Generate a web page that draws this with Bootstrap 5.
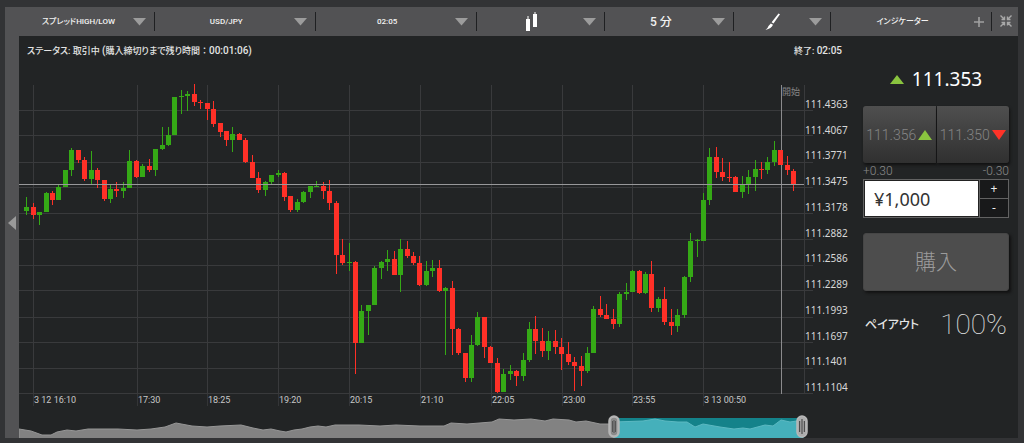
<!DOCTYPE html>
<html lang="ja">
<head>
<meta charset="utf-8">
<meta name="viewport" content="width=device-width, initial-scale=1">
<title>スプレッドHIGH/LOW USD/JPY</title>
<link href="https://cdn.jsdelivr.net/npm/bootstrap@5.3.0/dist/css/bootstrap.min.css" rel="stylesheet">
<style>
  body { background: #323335; color: #e4e4e4; font: 9px/12px Roboto, "Noto Sans CJK JP", sans-serif; font-feature-settings: "palt"; }
  .frame { background: #525254; margin: 7px 6px 5px 5px; }
  .rail { width: 14px; background: none; border: 0; padding: 0; flex: none; }
  .toolbar { height: 29px; font-size: 8px; font-weight: 500; }
  .tool { position: relative; min-width: 0; }
  .tool + .tool::before { content: ""; position: absolute; left: 0; top: 5px; height: 19px; width: 1px; background: #1f2022; }
  .tool select, .tool button { width: 100%; height: 29px; border: 0; padding: 0 16px 0 0; background: none; color: #f2f2f2; font: inherit; font-feature-settings: "palt"; text-align: center; text-align-last: center; appearance: none; }
  .tool select.period { font-size: 12px; }
  .tool option { color: #222; }
  .tool .caret { position: absolute; right: 8px; top: 11px; pointer-events: none; }
  .tool .plus { position: absolute; right: 7px; top: 10px; pointer-events: none; }
  .tool button.shrink { padding: 0 0 0 3px; }
  .w-a { flex: 135 1 0; } .w-b { flex: 161 1 0; } .w-c { flex: 129 1 0; } .w-d { flex: 97 1 0; } .w-e { flex: 27 1 0; }
  .stage { background: #222425; padding-right: 9px; }
  .status { height: 48px; padding: 9px 21px 0 8px; font-weight: 500; }
  .status time { font-size: 10px; }
  .plot { height: 310px; display: block; overflow: visible; }
  .times { display: grid; grid-template-columns: 14fr 104fr 70fr 71fr 71fr 71fr 71fr 71fr 70fr 71fr 101fr; height: 12px; }
  .times span { border-left: 1px solid #343537; white-space: nowrap; min-width: 0; color: #c8c8c8; }
  .times span:first-child { border: 0; }
  .prices { width: 59px; padding: 7px 0 0 1px; }
  .prices span { display: flex; align-items: center; flex: 1; font: 10px/12px "Noto Sans", sans-serif; color: #d8d8d8; }
  .pricebox { height: 316px; }
  .overview { height: 22px; margin: 10px 59px 0 0; display: block; position: relative; }
  .overview svg.area { width: 100%; height: 22px; display: block; }
  .grip { position: absolute; top: -1px; width: 12px; height: 23px; margin-left: -6px; }
  .startlabel { position: absolute; left: 97.2%; top: 2px; color: #858585; }
  .order { width: 146px; padding-top: 32px; flex: none; }
  .rate { font: 19px/22px "Noto Sans", sans-serif; color: #fff; height: 22px; margin-bottom: 16px; }
  .quotes { column-gap: 1px; }
  .quote { height: 57px; border: 0; padding: 0; column-gap: 2px; color: #858585; font-family: Roboto, sans-serif; font-size: 14px; font-weight: 300; background: linear-gradient(#4f4f4f, #303030); box-shadow: 1px 2px 3px #111; }
  .quote:first-child { border-radius: 3px 0 0 3px; }
  .quote:last-child { border-radius: 0 3px 3px 0; }
  .spread { font-size: 12px; line-height: 16px; font-weight: 300; color: #8a8a8a; }
  .stake { height: 39px; border: 1px solid #626262; }
  .stake input { width: 115px; border: 1px solid #222; border-radius: 0; background: #fff; color: #333; padding: 0 0 0 9px; font: 18px/24px "Noto Sans", "Noto Sans CJK JP", sans-serif; }
  .steps { border-left: 1px solid #626262; }
  .steps button { flex: 1; border: 0; padding: 0; background: #18191a; color: #eee; font: 12px/14px "Noto Sans", sans-serif; }
  .steps button + button { border-top: 1px solid #626262; }
  .buy { height: 58px; margin-top: 15px; border: 1px solid #464646; border-radius: 3px; background: #4d4d4d; color: #9b9b9b; font: 300 21px/24px "Noto Sans CJK JP", sans-serif; padding: 0 0 4px; box-shadow: 2px 2px 3px #111; }
  .payout { margin-top: 16px; padding: 0 2px; font-size: 12px; font-weight: 500; line-height: 36px; }
  .payout output { font-size: 28px; font-weight: 100; }
</style>
</head>
<body>
<main class="frame d-flex">
  <button class="rail d-flex align-items-center justify-content-center" aria-label="メニューを開く"><svg width="8" height="14"><path d="M8 0V14L0 7z" fill="#9a9a9a"/></svg></button>
  <div class="flex-grow-1">
    <nav class="toolbar d-flex" aria-label="チャート設定">
      <div class="tool w-a"><select aria-label="取引種別"><option>スプレッドHIGH/LOW</option></select><svg class="caret" width="13" height="8"><path d="M0 0H13L6.500 7.500z" fill="#9c9c9c"/></svg></div>
      <div class="tool w-b"><select aria-label="通貨ペア"><option>USD/JPY</option></select><svg class="caret" width="13" height="8"><path d="M0 0H13L6.500 7.500z" fill="#9c9c9c"/></svg></div>
      <div class="tool w-b"><select aria-label="終了時刻"><option>02:05</option></select><svg class="caret" width="13" height="8"><path d="M0 0H13L6.500 7.500z" fill="#9c9c9c"/></svg></div>
      <div class="tool w-c"><button aria-label="チャートの種類"><svg width="14" height="20"><path d="M1 7h4v12H1zM2.500 4h1v3h-1zM8 2h4v13H8zM9.500 0h1v2h-1z" fill="#fff"/></svg></button><svg class="caret" width="13" height="8"><path d="M0 0H13L6.500 7.500z" fill="#9c9c9c"/></svg></div>
      <div class="tool w-c"><select class="period" aria-label="時間足"><option>5 分</option></select><svg class="caret" width="13" height="8"><path d="M0 0H13L6.500 7.500z" fill="#9c9c9c"/></svg></div>
      <div class="tool w-d"><button aria-label="描画ツール"><svg width="20" height="18"><path d="M14.500.5L16 1.300 9.500 10.500 7.600 9.300zM6.800 10.500L9 11.800Q7.500 15.500 1.500 17Q4 15 4.500 13z" fill="#fff"/></svg></button><svg class="caret" width="13" height="8"><path d="M0 0H13L6.500 7.500z" fill="#9c9c9c"/></svg></div>
      <div class="tool w-b"><button>インジケーター</button><svg class="plus" width="10" height="10"><path d="M5 0V10M0 5H10" stroke="#a0a0a0" stroke-width="1.600"/></svg></div>
      <div class="tool w-e"><button class="shrink" aria-label="縮小"><svg width="12" height="12" fill="none" stroke="#a8a8a8" stroke-width="1.400"><path d="M.5.5L4.500 4.500M1.500 4.500H4.500V1.500M11.500.5L7.500 4.500M10.500 4.500H7.500V1.500M.5 11.500L4.500 7.500M1.500 7.500H4.500V10.500M11.500 11.500L7.500 7.500M10.500 7.500H7.500V10.500"/></svg></button></div>
    </nav>

    <div class="stage d-flex">
      <section class="flex-grow-1">
        <div class="status d-flex justify-content-between">
          <span>ステータス: 取引中 <time>(</time>購入締切りまで残り時間 ： <time>00:01:06)</time></span>
          <span>終了: <time>02:05</time></span>
        </div>
        <div class="d-flex">
          <div class="flex-grow-1 position-relative">
            <svg id="plot" class="plot w-100" viewBox="19 84 785 310" preserveAspectRatio="none" role="img" aria-label="USD/JPY 5分足"></svg>
            <span class="startlabel">開始</span>
            <div class="times"><span></span><span>3 12 16:10</span><span>17:30</span><span>18:25</span><span>19:20</span><span>20:15</span><span>21:10</span><span>22:05</span><span>23:00</span><span>23:55</span><span>3 13 00:50</span></div>
          </div>
          <div class="prices pricebox d-flex flex-column"><span>111.4363</span><span>111.4067</span><span>111.3771</span><span>111.3475</span><span>111.3178</span><span>111.2882</span><span>111.2586</span><span>111.2289</span><span>111.1993</span><span>111.1697</span><span>111.1401</span><span>111.1104</span></div>
        </div>
        <div class="overview">
          <svg class="area" viewBox="19 416 785 22" preserveAspectRatio="none" aria-hidden="true">
            <path id="past"/><rect x="614" y="418" width="189" height="20" fill="#14828a"/><path id="recent"/>
          </svg>
          <svg class="grip" style="left:75.8%" viewBox="0 0 12 23"><rect x="1.500" y="1.500" width="9" height="20" rx="4.500" fill="#8a8a8a" stroke="#b5b5b5" stroke-width="2.500"/><path d="M4.500 6V17M6 5V18M7.500 6V17" stroke="#555" stroke-width="1"/></svg>
          <svg class="grip" style="left:99.8%" viewBox="0 0 12 23"><rect x="1" y="1" width="10" height="21" rx="5" fill="#adadad" stroke="#b8b8b8" stroke-width="1.500"/><path d="M3.700 6V17M6 4V19M8.300 6V17" stroke="#2a2a2a" stroke-width=".9"/></svg>
        </div>
      </section>

      <section class="order" aria-label="注文">
        <div class="rate d-flex align-items-center justify-content-center gap-2"><svg width="14" height="9"><path d="M7 0L14 9H0z" fill="#8ac43f"/></svg><span>111.353</span></div>
        <div class="quotes d-flex">
          <button class="quote flex-fill d-flex align-items-center justify-content-center">111.356<svg width="14" height="10"><path d="M7 0L14 10H0z" fill="#8ac43f"/></svg></button>
          <button class="quote flex-fill d-flex align-items-center justify-content-center">111.350<svg width="14" height="10"><path d="M0 0H14L7 10z" fill="#ff3328"/></svg></button>
        </div>
        <div class="spread d-flex justify-content-between"><span>+0.30</span><span>-0.30</span></div>
        <div class="stake d-flex">
          <input type="text" value="¥1,000" aria-label="購入金額">
          <div class="steps flex-fill d-flex flex-column"><button>+</button><button>-</button></div>
        </div>
        <button class="buy w-100">購入</button>
        <div class="payout d-flex justify-content-between"><label for="payout">ペイアウト</label><output id="payout">100%</output></div>
      </section>
    </div>
  </div>
</main>
<script src="https://cdn.jsdelivr.net/npm/bootstrap@5.3.0/dist/js/bootstrap.bundle.min.js"></script>
<script>
// Each candle: direction, high, body top, body bottom, low (chart units)
const candles = `g197,207,211,215 r203,207,215,219 g212,212,215,225 g192,193,212,212 r191,193,200,205 g185,187,200,200 g170,170,187,187 g148,150,170,176 r150,150,160,163 r157,160,179,181
g151,170,179,184 r168,170,180,188 r180,180,199,201 g185,189,199,203 r182,189,191,197 g182,188,191,198 g150,161,188,188 r160,161,177,178 g164,166,177,177 r159,166,170,172
g149,149,170,176 g127,145,149,150 g127,135,145,146 g97,97,135,135 g90,96,97,114 g91,94,96,111 r84,94,102,106 r100,102,103,109 r103,103,109,120 r101,109,124,127
r123,123,132,137 r131,131,140,146 g127,134,140,152 r133,134,140,140 r138,140,162,163 r155,162,178,178 r172,178,190,193 g181,182,190,196 g175,175,182,184 g170,173,175,177
r172,173,197,201 r196,196,210,212 g199,202,210,212 g191,192,202,203 g186,186,192,198 g181,186,187,187 r182,186,191,199 r180,191,203,210 r201,203,255,274 r239,255,263,265
g243,262,263,271 r261,262,343,374 g305,311,343,343 g305,305,311,335 g266,268,305,305 g261,262,268,279 g250,259,262,271 r251,259,275,275 g239,249,275,292 r241,249,256,258
r252,256,263,265 r256,263,285,286 g261,271,285,286 g260,268,271,277 r260,268,291,292 g287,288,291,355 r281,288,329,355 r328,329,353,355 r353,353,378,382 g335,345,378,382
g312,317,345,346 r317,317,347,358 r346,347,363,363 r358,363,392,393 g369,374,392,392 g365,371,374,380 r370,371,376,386 g353,360,376,381 g322,329,360,362 r316,329,341,354
r328,341,351,357 g331,341,351,360 r330,341,347,354 r338,347,354,370 r342,354,362,365 r357,362,366,391 r356,366,371,386 g347,353,371,373 g306,309,353,353 r296,309,315,317
r304,315,319,319 r309,319,324,329 g292,294,324,327 g283,292,294,300 g270,271,292,292 r270,271,293,294 g272,274,293,294 r261,274,308,312 g297,299,308,312 r287,299,322,325
r309,322,326,335 g309,315,326,332 g276,277,315,318 g233,241,277,282 g239,240,241,257 g193,200,241,241 g148,157,200,205 r147,157,172,178 r158,172,177,181 r162,177,178,182
r176,177,192,192 g176,184,192,198 g170,177,185,194 g160,169,177,191 r162,169,170,179 g157,162,170,174 g141,150,162,166 r150,150,165,165 r156,165,170,175 r169,171,185,191`.split(/\s+/);
const rect = (x, y, w, h, c) => `<rect x="${x}" y="${y}" width="${w}" height="${h}" fill="${c}"/>`;
let out = '';
[110,135,162,187,213,239,265,290,317,342,368,393].forEach(y => out += rect(19, y, 794, 1, '#393a3c'));
[33,137,207,278,349,420,491,562,632,703,804].forEach(x => out += rect(x, 85, 1, 309, '#393a3c'));
out += rect(781, 85, 1, 309, '#8b8b8d');
candles.forEach((k, i) => {
  const c = k[0] === 'g' ? '#35a916' : '#ff3027';
  const [hi, top, bottom, lo] = k.slice(1).split(',').map(Number);
  const x = Math.round(26.2 + i * 6.446);
  out += rect(x, hi, 1, lo - hi, c) + rect(x - 2, top, 5, Math.max(1, bottom - top), c);
});
out += rect(19, 184, 785, 1, '#98989a');
document.getElementById('plot').innerHTML = '<g shape-rendering="crispEdges">' + out + '</g>';

function area(id, points, fill, line) {
  const p = document.getElementById(id), xs = points.split(' ');
  p.setAttribute('d', `M${xs[0].split(',')[0]},440L${xs.join('L')}L${xs[xs.length - 1].split(',')[0]},440z`);
  p.setAttribute('fill', fill);
  p.setAttribute('stroke', line);
}
area('past', '19,429 31,431 42,435 51,435 57,432 67,430 76,431 88,429 96,429 118,429 137,430 151,429 165,427 176,423 192,426 207,427 220,426 241,425 253,428 263,430 271,429 280,431 286,432 294,430 302,429 310,427 318,426 326,427 335,425 359,425 380,426 396,425 420,426 444,426 451,423 467,424 492,422 499,419 514,420 531,419 545,421 553,419 569,420 576,422 586,421 600,424 614,424', '#828282', '#969696');
area('recent', '614,422 643,421 655,419 665,421 678,422 687,422 695,427 703,424 720,427 734,429 743,428 750,429 765,425 773,426 781,420 790,422 803,420', '#45b0bb', '#5cb9c2');
</script>
</body>
</html>
